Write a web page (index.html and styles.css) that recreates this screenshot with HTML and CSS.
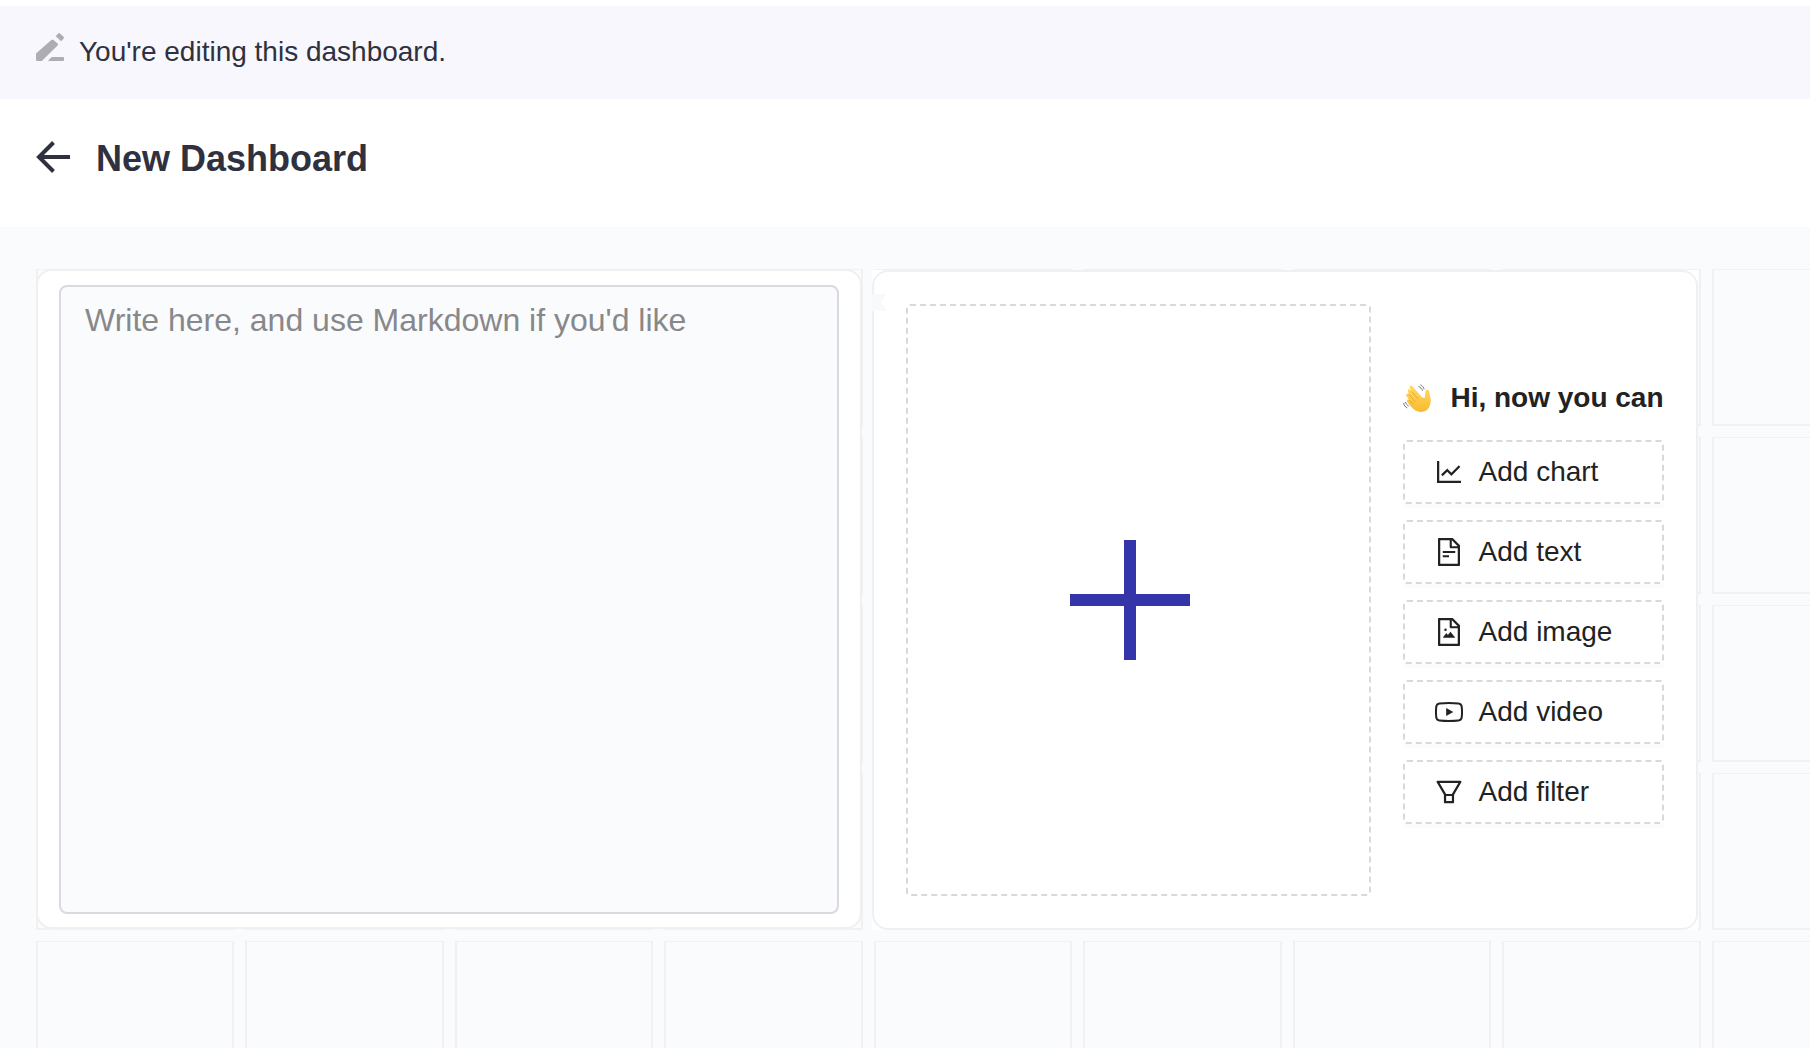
FILE: index.html
```html
<!DOCTYPE html>
<html lang="en">
<head>
  <meta charset="utf-8">
  <meta name="viewport" content="width=device-width, initial-scale=1">
  <title>New Dashboard</title>
  <link rel="stylesheet" href="styles.css">
</head>
<body>
  <div class="page">
    <div class="banner" role="status">
      <svg class="banner-icon" viewBox="0 0 28 28" aria-hidden="true">
        <path d="M0 20.600 15.300 6.900q1.200-1 2.300 0l4 3.700q.9.900 0 1.800L5.800 28H1q-1 0-1-1zM19.700 3.200l2.200-2.500q1.200-1.200 2.400 0l3 2.900q1.200 1.200 0 2.400l-2.200 2.300zM12 28l2.600-3q1-1 2-1H27q1 0 1 1v2q0 1-1 1z"/>
      </svg>
      <p class="banner-text">You're editing this dashboard.</p>
    </div>

    <header class="header">
      <button class="back" type="button" aria-label="Back">
        <svg viewBox="0 0 34 32" aria-hidden="true">
          <path d="M17.500 1.500 3 16l14.500 14.500M2.500 16H34"/>
        </svg>
      </button>
      <h1 class="title">New Dashboard</h1>
    </header>

    <main class="canvas">
      <div class="board">
        <div class="slots" aria-hidden="true">
          <i></i><i></i><i></i><i></i><i></i><i></i><i></i><i></i><i></i>
          <i></i><i></i><i></i><i></i><i></i><i></i><i></i><i></i><i></i>
          <i></i><i></i><i></i><i></i><i></i><i></i><i></i><i></i><i></i>
          <i></i><i></i><i></i><i></i><i></i><i></i><i></i><i></i><i></i>
          <i></i><i></i><i></i><i></i><i></i><i></i><i></i><i></i><i></i>
        </div>

        <div class="tiles">
          <section class="tile tile-text">
            <textarea class="editor" aria-label="Text" placeholder="Write here, and use Markdown if you'd like"></textarea>
          </section>

          <div class="tile-back">
            <section class="tile tile-add">
              <button class="drop" type="button" aria-label="Add item">
                <svg class="plus" viewBox="0 0 120 120" aria-hidden="true"><path d="M54 0h12v54h54v12H66v54H54V66H0V54h54z"/></svg>
              </button>
              <div class="menu">
                <h2 class="menu-title">
                  <svg class="wave" viewBox="0 0 28 28" aria-hidden="true">
                    <defs>
                      <linearGradient id="skin" x1="0" y1="0" x2="0" y2="1">
                        <stop offset="0" stop-color="#ffdb62"/>
                        <stop offset="1" stop-color="#f9b92f"/>
                      </linearGradient>
                    </defs>
                    <path class="palm" d="M11 25.500C8 23 5.500 20 4.200 17.700c-1-1.800.8-3 2-1.700L3.400 12c-1.200-2 1-3.200 2.300-1.700L5 7.500c-1-2.100 1.300-3.100 2.500-1.500l1.200 1.400-1.900-3.400c-.9-2.300 1.500-3.300 2.700-1.500l9.700 11 2.300.6c1-2.200.6-4 .9-6.500.3-2.600 3.600-2.200 3.900.2.300 2.500.9 4.200 1.300 7.200.5 3.500-.5 7.800-2.900 10.200-4 4-9.700 3.200-13.700.3z"/>
                    <path class="crease" d="m6.200 16 3.600 4M5.700 10.300l6.500 7.500M8.700 7.400l6.500 7.600"/>
                    <path class="motion" d="M15.500 2.500c2 .8 3.500 2.300 4 4.300M17.500.7c2 1 3.200 2.800 3.600 4.600M.6 19c.4 2.300 1.700 4 3.700 4.900M2.500 18c.4 1.800 1.500 3.200 3.200 4"/>
                  </svg>
                  <span>Hi, now you can</span>
                </h2>
                <button class="action" type="button">
                  <svg class="icon" viewBox="64 64 896 896" aria-hidden="true"><path d="M888 792H200V168c0-4.400-3.600-8-8-8h-56c-4.400 0-8 3.600-8 8v688c0 4.400 3.600 8 8 8h752c4.400 0 8-3.600 8-8v-56c0-4.400-3.600-8-8-8zM305.800 637.700c3.100 3.100 8.100 3.100 11.300 0l138.300-137.600L583 628.500c3.100 3.100 8.200 3.100 11.300 0l275.400-275.300c3.100-3.100 3.100-8.200 0-11.300l-39.600-39.600a8.030 8.030 0 0 0-11.300 0l-230 229.900L461.400 404a8.030 8.030 0 0 0-11.300 0L266.300 586.700a8.030 8.030 0 0 0 0 11.300l39.500 39.700z"/></svg>
                  Add chart
                </button>
                <button class="action" type="button">
                  <svg class="icon" viewBox="64 64 896 896" aria-hidden="true"><path d="M854.600 288.600L639.400 73.400c-6-6-14.100-9.400-22.600-9.400H192c-17.700 0-32 14.300-32 32v832c0 17.700 14.300 32 32 32h640c17.700 0 32-14.300 32-32V311.300c0-8.500-3.400-16.700-9.400-22.700zM790.200 326H602V137.800L790.200 326zm1.800 562H232V136h302v216a42 42 0 0 0 42 42h216v494zM504 618H320c-4.400 0-8 3.600-8 8v48c0 4.400 3.600 8 8 8h184c4.400 0 8-3.600 8-8v-48c0-4.400-3.600-8-8-8zM312 490v48c0 4.400 3.600 8 8 8h384c4.400 0 8-3.600 8-8v-48c0-4.400-3.600-8-8-8H320c-4.400 0-8 3.600-8 8z"/></svg>
                  Add text
                </button>
                <button class="action" type="button">
                  <svg class="icon" viewBox="64 64 896 896" aria-hidden="true"><path d="M553.100 509.100l-77.800 99.200-41.100-52.400a8 8 0 0 0-12.600 0l-99.800 127.200a7.980 7.980 0 0 0 6.300 12.900H696c6.700 0 10.400-7.700 6.300-12.900l-136.500-174a8.100 8.100 0 0 0-12.700 0zM360 442a40 40 0 1 0 80 0 40 40 0 1 0-80 0zm494.600-153.400L639.400 73.400c-6-6-14.100-9.400-22.600-9.400H192c-17.700 0-32 14.300-32 32v832c0 17.700 14.300 32 32 32h640c17.700 0 32-14.300 32-32V311.300c0-8.500-3.400-16.700-9.400-22.700zM790.200 326H602V137.800L790.200 326zm1.800 562H232V136h302v216a42 42 0 0 0 42 42h216v494z"/></svg>
                  Add image
                </button>
                <button class="action" type="button">
                  <svg class="icon" viewBox="0 0 28 28" aria-hidden="true"><path class="outline" d="M14 5.100c3.600 0 7.200.1 9.600.4 1.700.2 2.900 1.400 3.100 3.100.4 3.300.4 7.500 0 10.800-.2 1.700-1.400 2.900-3.100 3.100-4.800.5-14.400.5-19.200 0-1.700-.2-2.900-1.400-3.100-3.100-.4-3.300-.4-7.500 0-10.800.2-1.700 1.400-2.900 3.100-3.100 2.400-.3 6-.4 9.600-.4z"/><path d="M11.200 9.900v8.200l7.100-4.100z"/></svg>
                  Add video
                </button>
                <button class="action" type="button">
                  <svg class="icon" viewBox="64 64 896 896" aria-hidden="true"><path d="M880.100 154H143.900c-24.500 0-39.800 26.700-27.500 48L349 597.400V838c0 17.700 14.200 32 31.800 32h262.400c17.600 0 31.800-14.300 31.800-32V597.400L907.700 202c12.200-21.300-3.100-48-27.600-48zM603.400 798H420.600V642h182.900v156zm9.600-236.600l-9.500 16.600h-183l-9.500-16.600L212.700 226h598.600L613 561.400z"/></svg>
                  Add filter
                </button>
              </div>
            </section>
            <svg class="ribbon" viewBox="0 0 15 17" aria-hidden="true"><path d="M0 0h15L9 8l6 9H0z"/></svg>
          </div>
        </div>
      </div>
    </main>
  </div>
</body>
</html>
```

FILE: styles.css
```css
* {
  box-sizing: border-box;
}

body {
  margin: 0;
  background: #fff;
  color: #2f313f;
  font-family: "Liberation Sans", Arial, sans-serif;
}

button,
textarea {
  margin: 0;
  font: inherit;
}

button {
  cursor: pointer;
}

svg {
  display: block;
  flex: none;
}

.page {
  display: flex;
  flex-direction: column;
  height: 100vh;
  padding-top: 6px;
  overflow: hidden;
}

/* Edit-mode notice */

.banner {
  display: flex;
  flex: none;
  align-items: flex-start;
  gap: 15px;
  padding: 27px 36px 31px;
  background: #f8f7fd;
}

.banner-icon {
  width: 28px;
  height: 28px;
  fill: #aeadb2;
}

.banner-text {
  margin: 0;
  padding-top: 3px;
  font-size: 28px;
  line-height: 32px;
}

/* Title bar */

.header {
  display: flex;
  flex: none;
  align-items: center;
  gap: 26px;
  padding: 34px 36px 46px;
}

.back {
  padding: 0;
  border: 0;
  background: none;
}

.back svg {
  width: 34px;
  height: 32px;
  fill: none;
  stroke: #2f313f;
  stroke-width: 4px;
}

.title {
  margin: 0;
  padding-top: 4px;
  font-size: 36px;
  line-height: 44px;
}

/* Board: drop slots with the tiles laid over them */

.canvas {
  flex: 1;
  min-height: 0;
  padding: 42px 0 0 36px;
  overflow: hidden;
  background: #fafbfd;
}

.board {
  display: grid;
  margin-right: -100px;
}

.slots,
.tiles {
  display: grid;
  grid-area: 1 / 1;
  grid-template-columns: repeat(9, minmax(0, 1fr));
  grid-template-rows: repeat(5, 157px);
  gap: 11px;
}

.slots i {
  border: 2px solid #f1f1f3;
  border-top-width: 1px;
}

.tile {
  border: 2px solid #f0f0f0;
  border-radius: 16px;
  background: #fff;
}

.tile-text {
  display: flex;
  grid-area: 1 / 1 / 5 / 5;
  margin: 0 1px 1px 0;
  padding: 14px 21px 13px;
}

.editor {
  flex: 1;
  padding: 15px 24px;
  border: 2px solid #d9dae0;
  border-radius: 8px;
  outline: 0;
  background: #fafbfd;
  color: #2f313f;
  font-size: 32px;
  line-height: 36px;
  resize: none;
}

.editor::placeholder {
  color: #88888b;
  opacity: 1;
}

.tile-back {
  position: relative;
  display: flex;
  grid-area: 1 / 5 / 5 / 9;
  margin: 1px 3px 0 -2px;
  background: #fff;
}

.tile-add {
  display: flex;
  flex: 1;
  gap: 32px;
  padding: 32px;
}

.ribbon {
  position: absolute;
  top: 24px;
  left: 0;
  width: 15px;
  height: 17px;
  fill: #f9f9f9;
}

.drop {
  display: flex;
  flex: 1;
  align-items: center;
  justify-content: center;
  padding: 0 16px 0 0;
  border: 2px dashed #d9d9d9;
  border-radius: 4px;
  background: #fff;
}

.plus {
  width: 120px;
  height: 120px;
  fill: #3335a9;
}

.menu {
  display: flex;
  flex: none;
  flex-direction: column;
  justify-content: center;
  gap: 16px;
  width: 261px;
  color: #222;
}

.menu-title {
  display: flex;
  align-items: center;
  justify-content: space-between;
  margin: 0;
  padding: 4px 0 8px;
  font-size: 28px;
  line-height: 36px;
  white-space: nowrap;
}

.wave {
  width: 28px;
  height: 28px;
}

.palm {
  fill: url(#skin);
}

.crease {
  fill: none;
  stroke: #e59f2c;
  stroke-width: 0.8px;
}

.motion {
  fill: none;
  stroke: #75787c;
  stroke-width: 1px;
}

.action {
  display: flex;
  align-items: center;
  gap: 16px;
  height: 64px;
  padding: 0 30px;
  border: 2px dashed #d9d9d9;
  border-radius: 4px;
  background: #fff;
  box-shadow: 0 4px 0 rgba(0, 0, 0, 0.016);
  color: #222;
  font-size: 28px;
  line-height: 32px;
  white-space: nowrap;
}

.icon {
  width: 28px;
  height: 28px;
  fill: currentColor;
}

.outline {
  fill: none;
  stroke: currentColor;
  stroke-width: 2px;
}
```
